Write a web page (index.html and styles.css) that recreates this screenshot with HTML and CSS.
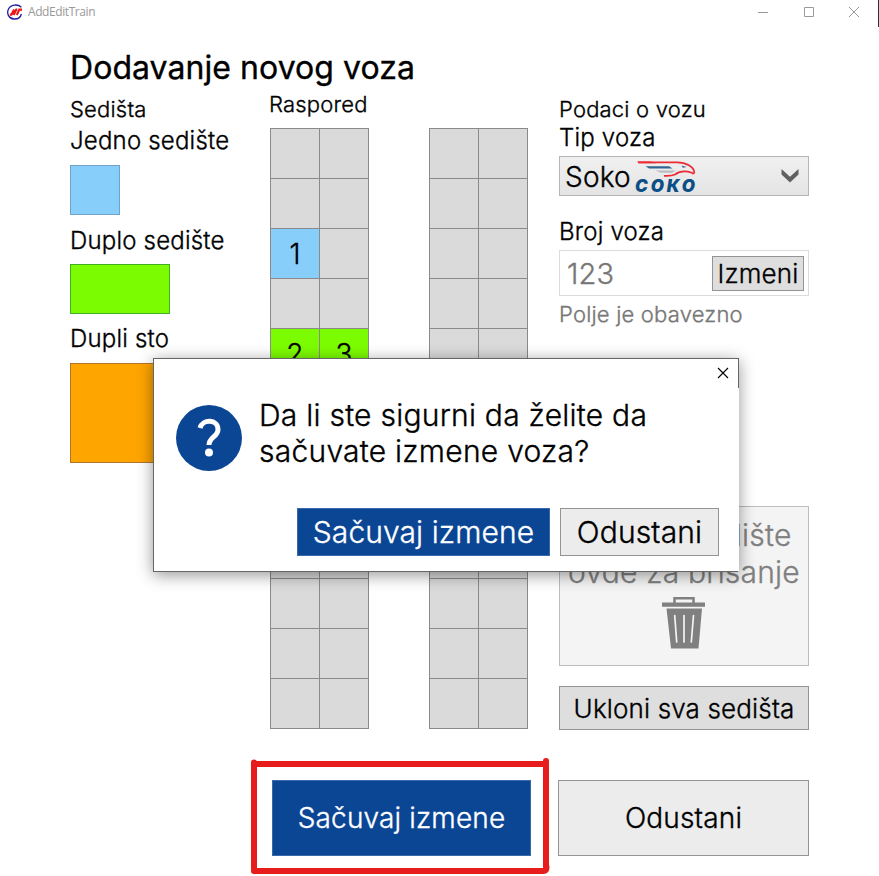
FILE: index.html
```
<!DOCTYPE html>
<html lang="sr-Latn">
<head>
<meta charset="utf-8">
<title>AddEditTrain</title>
<link rel="stylesheet" href="styles.css">
</head>
<body>
<header class="titlebar">
  <svg class="app-icon" viewBox="0 0 16 16" width="16" height="16">
    <path d="M14.4 3.2C10.500-.3 3.600.4 1.400 5.200C-.6 9.500 1.800 14.700 7 15C10.800 15.200 13.600 13 14.400 10" fill="none" stroke="#1d1da8" stroke-width="1.300"/>
    <path d="M2.800 10.600h1.600L7.200 5.500M6.600 11L9.300 5.500h1M9.800 11L12.300 5.600H15" fill="none" stroke="#f01414" stroke-width="2.100"/>
  </svg>
  <span class="app-name">AddEditTrain</span>
  <div class="window-buttons">
    <svg viewBox="0 0 12 12" width="12" height="12"><path d="M1 6.500h10" /></svg>
    <svg viewBox="0 0 12 12" width="12" height="12"><path d="M1.500 1.500h9v9h-9z"/></svg>
    <svg viewBox="0 0 12 12" width="12" height="12"><path d="M1 1l10 10M11 1L1 11"/></svg>
  </div>
</header>
<main class="page">
  <h1>Dodavanje novog voza</h1>
  <div class="columns">
    <section class="palette">
      <h2>Sedišta</h2>
      <p>Jedno sedište</p>
      <div class="swatch single"></div>
      <p>Duplo sedište</p>
      <div class="swatch double"></div>
      <p>Dupli sto</p>
      <div class="swatch table"></div>
    </section>
    <section class="layout">
      <h2>Raspored</h2>
      <div class="blocks">
        <div class="seats">
          <i></i><i></i><i></i><i></i><i class="blue">1</i><i></i><i></i><i></i><i class="green">2</i><i class="green">3</i><i></i><i></i>
          <i></i><i></i><i></i><i></i><i></i><i></i><i></i><i></i><i></i><i></i><i></i><i></i>
        </div>
        <div class="seats">
          <i></i><i></i><i></i><i></i><i></i><i></i><i></i><i></i><i></i><i></i><i></i><i></i>
          <i></i><i></i><i></i><i></i><i></i><i></i><i></i><i></i><i></i><i></i><i></i><i></i>
        </div>
      </div>
    </section>
    <section class="details">
      <h2>Podaci o vozu</h2>
      <p>Tip voza</p>
      <div class="combo">
        <span>Soko</span>
        <svg class="soko" viewBox="0 0 62 34" width="62" height="34">
          <path d="M3 2.300H42C51 2.300 59 6.500 59.300 12.500Q58 14.500 56.800 12.800C50 10.500 44 11.500 40 14.500Q36 16.300 29 15.800" fill="none" stroke="#ec2b35" stroke-width="1.700"/>
          <path d="M2 1.500H16L21 3.200H4z" fill="#ec2b35"/>
          <path d="M10.500 6.200H34L37.500 8.600H14z" fill="#2d6491"/>
          <path d="M20 10.500H41L37 12.800H26z" fill="#b9bcbf"/>
          <path d="M46.500 5.500l5 1.600-3.600.6z" fill="#2d6491"/>
          <text x="0" y="31.500" textLength="60" lengthAdjust="spacing">СОКО</text>
        </svg>
        <svg class="arrow" viewBox="0 0 20 16" width="20" height="16"><path d="M1.500 1v5.500L10 14.500 18.500 6.500V1L10 8.800z" fill="#606060"/></svg>
      </div>
      <p class="number-label">Broj voza</p>
      <div class="field"><span>123</span><button>Izmeni</button></div>
      <div class="hint">Polje je obavezno</div>
      <div class="dropzone">
        <span>Prevuci sedište</span>
        <span>ovde za brisanje</span>
        <svg viewBox="0 0 44 54" width="44" height="54">
          <path d="M12.500 7V2.200H31.500V7" fill="none" stroke="#808080" stroke-width="2.500"/>
          <path d="M0 6.500h43v4.300H0zM4.500 12.500h35.500L36.500 52.500H9z" fill="#808080"/>
          <path d="M12.700 19.500L14.700 46M22 19.500V46M31.500 19.500L29.300 46" stroke="#f4f4f4" stroke-width="1.700" stroke-linecap="round"/>
        </svg>
      </div>
      <button class="clear">Ukloni sva sedišta</button>
    </section>
  </div>
  <footer class="actions">
    <div class="highlight">
      <button class="primary">Sačuvaj izmene</button>
      <svg viewBox="0 0 300 118" width="300" height="118"><path d="M4 6H295M3 4.500V112M3 113H292.500Q295.500 113 295.500 109M295 3V109" fill="none" stroke="#e71c1c" stroke-width="6" stroke-linecap="round" stroke-linejoin="round"/></svg>
    </div>
    <button class="cancel">Odustani</button>
  </footer>
</main>
<div class="dialog">
  <svg class="close" viewBox="0 0 12 12" width="12" height="12"><path d="M1 1l10 10M11 1L1 11"/></svg>
  <div class="message">
    <svg viewBox="0 0 66 66" width="66" height="66">
      <circle cx="33" cy="33" r="33" fill="#0b4695"/>
      <path d="M24 23C26.500 13.500 42 14 42 24.500C42 32 33 32 33 40" fill="none" stroke="#fff" stroke-width="5"/>
      <circle cx="33" cy="47.500" r="4" fill="#fff"/>
    </svg>
    <div>Da li ste sigurni da želite da<br>sačuvate izmene voza?</div>
  </div>
  <div class="dialog-actions">
    <button class="primary">Sačuvaj izmene</button>
    <button class="cancel">Odustani</button>
  </div>
</div>
</body>
</html>
```
FILE: styles.css
```
* { box-sizing: border-box; }
body {
  margin: 0;
  width: 879px;
  height: 876px;
  position: relative;
  overflow: hidden;
  background: #fff;
  color: #000;
  font: 300 24px/32px Inter, sans-serif;
  letter-spacing: 0.2px;
  -webkit-text-stroke: 0.35px currentColor;
}
h1, h2, p { margin: 0; font-weight: inherit; }
button {
  font: inherit;
  letter-spacing: 0.15px;
  color: #000;
  padding: 0;
  border: 1px solid #949494;
  background: #dedede;
  white-space: nowrap;
}
svg { display: block; flex: none; }

.titlebar {
  height: 27px;
  display: flex;
  align-items: flex-start;
  padding: 4px 0 0 7px;
  border-right: 1px solid #333;
  -webkit-text-stroke: 0;
}
.app-name {
  margin-left: 5px;
  font: 12px/16px "Open Sans", sans-serif;
  letter-spacing: -0.42px;
  color: #999;
}
.window-buttons {
  margin: 2px 18px 0 auto;
  display: flex;
  gap: 33.500px;
}
.window-buttons path { fill: none; stroke: #999; }

.page { padding: 0 70px; }
h1 { height: 59px; padding-top: 21px; font-size: 32px; font-weight: 400; line-height: 40px; letter-spacing: 0.06px; }
h2 { font-size: 22px; line-height: 30px; }
.columns { display: flex; height: 694px; }

.palette { width: 199px; padding-top: 8px; }
.palette p { position: relative; top: 1px; }
.swatch { height: 50px; border: 1px solid #6fa3ca; margin: 9px 0; }
.single { width: 50px; background: #87cefa; }
.double { width: 100px; margin: 8px 0; background: #7cfc00; border-color: #42ae23; }
.table { width: 100px; height: 100px; background: #ffa500; border-color: #b3742e; }

.layout { width: 290px; padding-top: 3px; }
.blocks { display: flex; gap: 60px; padding: 9px 0 0 1px; }
.seats {
  display: grid;
  grid-template-columns: 48px 48px;
  grid-auto-rows: 49px;
  gap: 1px;
  padding: 1px;
  background: #8a8a8a;
}
.seats i {
  display: flex;
  align-items: center;
  justify-content: center;
  font-style: normal;
  font-size: 28px;
  background: #dadada;
}
.seats .blue { background: #87cefa; }
.seats .green { background: #7cfc00; }

.details { width: 250px; padding-top: 8px; }
.details p { margin-top: 2px; line-height: 24px; }
.combo {
  height: 40px;
  margin-top: 6px;
  padding: 2px 8px 0 5px;
  display: flex;
  align-items: center;
  border: 1px solid #b5b5b5;
  background: linear-gradient(#f0f0f0, #e4e4e4);
  font-size: 28px;
}
.soko { margin-left: 4px; overflow: visible; }
.soko text { font: italic 900 17px Inter, sans-serif; letter-spacing: 0; fill: #0c4f86; -webkit-text-stroke: 0; }
.arrow { margin: -2px 0 0 auto; }
.details .number-label { margin-top: 24px; }
.field {
  height: 46px;
  margin-top: 6px;
  padding: 0 4px 0 7px;
  display: flex;
  align-items: center;
  justify-content: space-between;
  border: 1px solid #dcdcdc;
  font-size: 29px;
  color: #777;
}
.field span { padding-top: 1px; }
.field button { width: 92px; height: 35px; padding-top: 2px; font-size: 26px; line-height: 30px; }
.hint { margin-top: 3px; font-size: 22px; line-height: 30px; color: #777; }
.dropzone {
  height: 160px;
  margin-top: 177px;
  padding-top: 10px;
  display: flex;
  flex-direction: column;
  align-items: center;
  border: 1px solid #bdbdbd;
  background: #f4f4f4;
  font-size: 30px;
  line-height: 37px;
  color: #808080;
  white-space: nowrap;
}
.dropzone svg { margin-top: 5px; }
.clear { width: 250px; height: 44px; margin-top: 20px; padding-top: 1px; font-size: 26px; display: block; }

.actions { display: flex; justify-content: flex-end; }
.actions button { height: 76px; font-size: 28px; }
.highlight { position: relative; width: 259px; margin-right: 27px; }
.highlight svg { position: absolute; left: -21px; top: -22px; }
.primary, .actions .primary { background: #0b4695; border-color: #3a69aa; color: #fff; }
.actions .primary { width: 259px; }
.cancel { background: #ececec; }
.actions .cancel { width: 251px; }

.dialog {
  position: absolute;
  left: 153px;
  top: 358px;
  width: 586px;
  height: 214px;
  padding: 38px 19px 15px 22px;
  display: flex;
  flex-direction: column;
  justify-content: space-between;
  background: #fff;
  border: 1px solid #666;
  border-right-color: #fff;
  box-shadow: 0 3px 15px rgba(0, 0, 0, .42);
  font-size: 30px;
  line-height: 36px;
}
.dialog::after {
  content: "";
  position: absolute;
  top: -1px;
  right: -1px;
  width: 1px;
  height: 30px;
  background: #666;
}
.close { position: absolute; right: 9px; top: 8px; }
.close path { stroke: #000; stroke-width: 1.100; }
.message { display: flex; gap: 17px; white-space: nowrap; letter-spacing: 0.25px; }
.message svg { margin-top: 8px; }
.dialog-actions { display: flex; justify-content: flex-end; gap: 10px; }
.dialog-actions button { height: 48px; width: 159px; }
.dialog-actions .primary { width: 253px; letter-spacing: 0.09px; }
```
